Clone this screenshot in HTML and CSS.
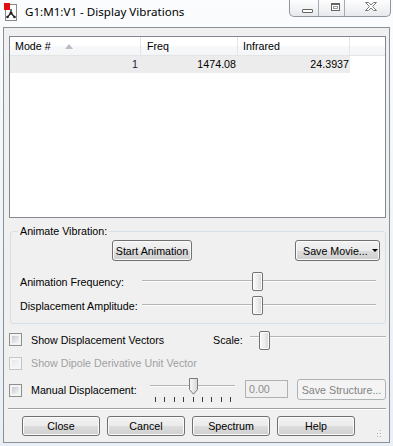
FILE: index.html
```html
<!DOCTYPE html>
<html lang="en">
<head>
    <meta charset="UTF-8">
    <title>G1:M1:V1 - Display Vibrations</title>
    <link rel="stylesheet" href="styles.css">
</head>
<body>
    <div class="window">
        <div class="titlebar">
            <svg class="app-icon" width="14" height="18" viewBox="0 0 14 18">
                <rect x="1.5" y="1.5" width="11" height="16" fill="#fff" stroke="#8a8a8a"/>
                <rect x="0" y="0" width="6" height="7" fill="#e01010"/>
                <path d="M7 6 L7 10 L3.5 14 M7 10 L10.5 14" stroke="#222" stroke-width="1.3" fill="none"/>
                <circle cx="7" cy="10" r="1.6" fill="#222"/>
                <circle cx="3.5" cy="14" r="1.3" fill="#222"/>
                <circle cx="10.5" cy="14" r="1.3" fill="#222"/>
            </svg>
            <span class="title">G1:M1:V1 - Display Vibrations</span>
            <div class="caption">
                <span class="cap-btn min"><i class="min-glyph"></i></span>
                <span class="cap-btn max"><i class="max-glyph"></i></span>
                <span class="cap-btn close">
                    <svg width="12" height="9" viewBox="0 0 12 9">
                        <polygon points="0.5,0.5 3.5,0.5 6,3 8.5,0.5 11.5,0.5 7.5,4.5 11.5,8.5 8.5,8.5 6,6 3.5,8.5 0.5,8.5 4.5,4.5" fill="#fff" stroke="#7a7a7a"/>
                    </svg>
                </span>
            </div>
        </div>

        <div class="client">
            <div class="listview">
                <div class="lv-header">
                    <div class="hcol c1">Mode # <span class="sort-arrow"></span></div>
                    <div class="hcol c2">Freq</div>
                    <div class="hcol c3">Infrared</div>
                    <div class="hcol filler"></div>
                </div>
                <div class="lv-row">
                    <div class="cell c1">1</div>
                    <div class="cell c2">1474.08</div>
                    <div class="cell c3">24.3937</div>
                </div>
            </div>

            <div class="group">
                <div class="group-title">Animate Vibration:</div>
                <div class="btn-row">
                    <button class="btn start">Start Animation</button>
                    <button class="btn movie">Save Movie...<span class="caret"></span></button>
                </div>
                <div class="slider-row first">
                    <span class="slider-label">Animation Frequency:</span>
                    <div class="slider"><span class="thumb freq"></span></div>
                </div>
                <div class="slider-row">
                    <span class="slider-label">Displacement Amplitude:</span>
                    <div class="slider"><span class="thumb amp"></span></div>
                </div>
            </div>

            <div class="opt-row vectors">
                <span class="check"></span>
                <span class="opt-label wide">Show Displacement Vectors</span>
                <span class="scale-label">Scale:</span>
                <div class="slider scale"><span class="thumb scale-thumb"></span></div>
            </div>

            <div class="opt-row dipole">
                <span class="check disabled"></span>
                <span class="opt-label muted">Show Dipole Derivative Unit Vector</span>
            </div>

            <div class="opt-row manual">
                <span class="check"></span>
                <span class="opt-label manual-label">Manual Displacement:</span>
                <div class="tick-slider">
                    <div class="tick-track">
                        <svg class="pointer" width="9" height="17" viewBox="0 0 9 17">
                            <defs>
                                <linearGradient id="pg" x1="0" y1="0" x2="1" y2="0">
                                    <stop offset="0" stop-color="#fafafa"/>
                                    <stop offset="1" stop-color="#d6d6d6"/>
                                </linearGradient>
                            </defs>
                            <path d="M0.5 0.5 H8.5 V11.5 L4.5 16.2 L0.5 11.5 Z" fill="url(#pg)" stroke="#7a7a7a"/>
                        </svg>
                    </div>
                    <div class="ticks">
                        <i></i><i></i><i></i><i></i><i></i><i></i><i></i><i></i><i></i>
                    </div>
                </div>
                <span class="textbox">0.00</span>
                <button class="btn disabled save-structure">Save Structure...</button>
            </div>

            <div class="separator"></div>

            <div class="bottom-row">
                <button class="btn footer">Close</button>
                <button class="btn footer">Cancel</button>
                <button class="btn footer">Spectrum</button>
                <button class="btn footer">Help</button>
                <svg class="grip" width="7" height="7" viewBox="0 0 7 7">
                    <rect x="5" y="0" width="1" height="1" fill="#b0b0b0"/>
                    <rect x="5" y="3" width="1" height="1" fill="#b0b0b0"/>
                    <rect x="5" y="6" width="1" height="1" fill="#b0b0b0"/>
                    <rect x="2" y="3" width="1" height="1" fill="#b0b0b0"/>
                    <rect x="2" y="6" width="1" height="1" fill="#b0b0b0"/>
                    <rect x="6" y="1" width="1" height="1" fill="#fff"/>
                    <rect x="6" y="4" width="1" height="1" fill="#fff"/>
                    <rect x="3" y="4" width="1" height="1" fill="#fff"/>
                </svg>
            </div>
        </div>
    </div>
</body>
</html>
```

FILE: styles.css
```css
* {
    box-sizing: border-box;
}

body {
    margin: 0;
    width: 393px;
    height: 446px;
    overflow: hidden;
    font: 10.7px "Liberation Sans", Arial, sans-serif;
    color: #000;
    background: #eef3f8;
}

.window {
    width: 393px;
    height: 446px;
    display: flex;
    flex-direction: column;
    background: linear-gradient(#fbfcfe, #f2f6fa 40%, #e9eff5);
}

/* Title bar */
.titlebar {
    height: 27px;
    flex: none;
    display: flex;
    align-items: flex-start;
}

.app-icon {
    margin: 3px 0 0 4px;
}

.title {
    margin: 4px 0 0 7px;
    font: 11.6px "Noto Sans", sans-serif;
    line-height: 16px;
}

.caption {
    margin-left: auto;
    margin-right: 2px;
    height: 17px;
    display: flex;
    border: 1px solid #8f969e;
    border-top: none;
    border-radius: 0 0 5px 5px;
    overflow: hidden;
    background: linear-gradient(#fefefe, #f3f4f6 50%, #e6e9ec);
}

.cap-btn {
    display: flex;
    align-items: center;
    justify-content: center;
    padding-left: 7px;
}

.cap-btn + .cap-btn {
    border-left: 1px solid #a3abb4;
}

.cap-btn.min {
    width: 28px;
    padding-top: 5px;
}

.cap-btn.max {
    width: 26px;
    padding-bottom: 2px;
}

.cap-btn.close {
    width: 46px;
    padding-bottom: 3px;
}

.min-glyph {
    width: 11px;
    height: 4px;
    border: 1px solid #646464;
    border-radius: 1px;
    background: #fff;
}

.max-glyph {
    width: 9px;
    height: 8px;
    border: 1px solid #646464;
    border-top-width: 2px;
    background: #fff;
    box-shadow: inset 0 0 0 1px #fff, inset 0 0 0 2px #9a9a9a;
}

/* Client area */
.client {
    flex: 1;
    margin: 0 3px 3px 3px;
    border: 1px solid #8a9097;
    background: #f0f0f0;
    display: flex;
    flex-direction: column;
}

/* List view */
.listview {
    flex: none;
    height: 182px;
    margin: 8px 3px 0 5px;
    border: 1px solid #828790;
    background: #fff;
}

.lv-header {
    display: flex;
    height: 19px;
    border-bottom: 1px solid #e3e4e6;
    background: linear-gradient(#fff, #fff 50%, #f8f9fa 50%, #f4f5f7);
}

.hcol {
    line-height: 18px;
    padding-left: 5px;
    border-right: 1px solid #e2e4e7;
    white-space: nowrap;
}

.hcol.c2 {
    padding-left: 6px;
}

.hcol.filler {
    flex: 1;
    border-right: none;
}

.c1 {
    width: 131px;
}

.c2 {
    width: 97px;
}

.c3 {
    width: 112px;
}

.sort-arrow {
    display: inline-block;
    width: 0;
    height: 0;
    margin-left: 11px;
    vertical-align: 1px;
    border-left: 4px solid transparent;
    border-right: 4px solid transparent;
    border-bottom: 5px solid #b9bcc1;
}

.lv-row {
    display: flex;
    height: 17px;
    line-height: 17px;
}

.cell {
    text-align: right;
    padding-right: 2px;
    background: #ececec;
}

.cell.c1 {
    padding-right: 3px;
    color: #1b1b3a;
}

.cell.c3 {
    padding-right: 1px;
}

/* Group box */
.group {
    flex: none;
    margin: 13px 3px 0 6px;
    padding-bottom: 8px;
    border: 1px solid #d5dfe5;
    border-radius: 3px;
}

.group-title {
    width: max-content;
    margin: -7px 0 0 7px;
    padding: 0 2px;
    line-height: 13px;
    background: #f0f0f0;
}

.btn-row {
    display: flex;
    justify-content: space-between;
    height: 21px;
    margin-top: 2px;
    padding: 0 5px 0 101px;
}

/* Buttons */
.btn {
    font: 10.7px "Liberation Sans", Arial, sans-serif;
    color: #000;
    padding: 0;
    border: 1px solid #707070;
    border-radius: 3px;
    background: linear-gradient(#f2f2f2, #ebebeb 50%, #dddddd 50%, #cfcfcf);
    box-shadow: inset 0 0 0 1px #fbfbfb;
}

.btn.start {
    width: 80px;
}

.btn.movie {
    width: 85px;
    display: inline-flex;
    align-items: center;
    gap: 4px;
    padding-left: 7px;
}

.caret {
    width: 0;
    height: 0;
    border-left: 3px solid transparent;
    border-right: 3px solid transparent;
    border-top: 3px solid #000;
}

.btn.disabled {
    color: #838383;
    border-color: #adb2b5;
    background: #f4f4f4;
    box-shadow: none;
}

/* Sliders */
.slider-row {
    display: flex;
    align-items: center;
    height: 19px;
    margin-top: 5px;
    padding: 0 9px;
}

.slider-row.first {
    margin-top: 11px;
}

.slider-label {
    width: 122px;
    flex: none;
}

.slider {
    flex: 1;
    height: 19px;
    display: flex;
    background: linear-gradient(to bottom, transparent 8px, #b5b5b5 8px, #b5b5b5 9px, #fcfcfc 9px, #fcfcfc 10px, transparent 10px);
}

.thumb {
    width: 11px;
    height: 19px;
    border: 1px solid #727272;
    border-radius: 2px;
    background: linear-gradient(to right, #fbfbfb, #e9e9e9 60%, #d3d3d3);
    box-shadow: inset 0 0 0 1px #fefefe;
}

.thumb.freq,
.thumb.amp {
    margin-left: 110px;
}

.slider.scale {
    flex: 1;
    margin-right: 3px;
    background: linear-gradient(to bottom, transparent 5px, #b5b5b5 5px, #b5b5b5 6px, #fcfcfc 6px, #fcfcfc 7px, transparent 7px);
}

.thumb.scale-thumb {
    margin-left: 9px;
}

/* Option rows */
.opt-row {
    display: flex;
    flex: none;
    align-items: flex-start;
}

.opt-row.vectors {
    height: 19px;
    margin-top: 7px;
}

.opt-row.dipole {
    height: 13px;
    margin-top: 7px;
}

.opt-row.manual {
    height: 26px;
    margin-top: 7px;
}

.check {
    flex: none;
    width: 13px;
    height: 13px;
    margin-left: 5px;
    border: 1px solid #8e8f8f;
    padding: 2px;
    background: linear-gradient(135deg, #c6cad0, #f6f6f7) content-box, #f4f4f4;
}

.vectors .check {
    margin-top: 2px;
}

.manual .check {
    margin-top: 7px;
}

.check.disabled {
    border-color: #c5c6c7;
    background: linear-gradient(135deg, #e6e7e9, #f7f7f7) content-box, #f6f6f6;
}

.opt-label {
    margin-left: 9px;
    line-height: 13px;
    white-space: nowrap;
}

.vectors .opt-label {
    margin-top: 3px;
}

.opt-label.wide {
    width: 182px;
}

.opt-label.muted {
    color: #a0a0a0;
}

.opt-label.manual-label {
    width: 119px;
    margin-top: 7px;
}

.scale-label {
    width: 37px;
    margin-top: 3px;
    line-height: 13px;
}

/* Slider with ticks */
.tick-slider {
    width: 85px;
    margin-top: 1px;
}

.tick-track {
    height: 17px;
    padding-left: 39px;
    background: linear-gradient(to bottom, transparent 7px, #b5b5b5 7px, #b5b5b5 8px, #fcfcfc 8px, #fcfcfc 9px, transparent 9px);
}

.pointer {
    display: block;
}

.ticks {
    display: flex;
    justify-content: space-between;
    width: 76px;
    height: 5px;
    margin: 2px 0 0 5px;
}

.ticks i {
    width: 1px;
    height: 5px;
    background: #3c3c3c;
}

.textbox {
    width: 43px;
    height: 18px;
    margin: 3px 0 0 10px;
    padding-left: 3px;
    line-height: 16px;
    color: #8d8d8d;
    border: 1px solid #adb2b5;
    background: #f0f0f0;
}

.btn.save-structure {
    width: 89px;
    height: 21px;
    margin: 2px 0 0 9px;
}

.separator {
    flex: none;
    height: 2px;
    margin: 5px 3px 0 4px;
    border-top: 1px solid #a0a0a0;
    border-bottom: 1px solid #fff;
}

.bottom-row {
    display: flex;
    flex: none;
    gap: 7px;
    height: 20px;
    margin-top: 6px;
    padding: 0 7px 0 18px;
}

.btn.footer {
    width: 78px;
}

.grip {
    margin-left: auto;
    align-self: flex-end;
    margin-bottom: -1px;
}
```
